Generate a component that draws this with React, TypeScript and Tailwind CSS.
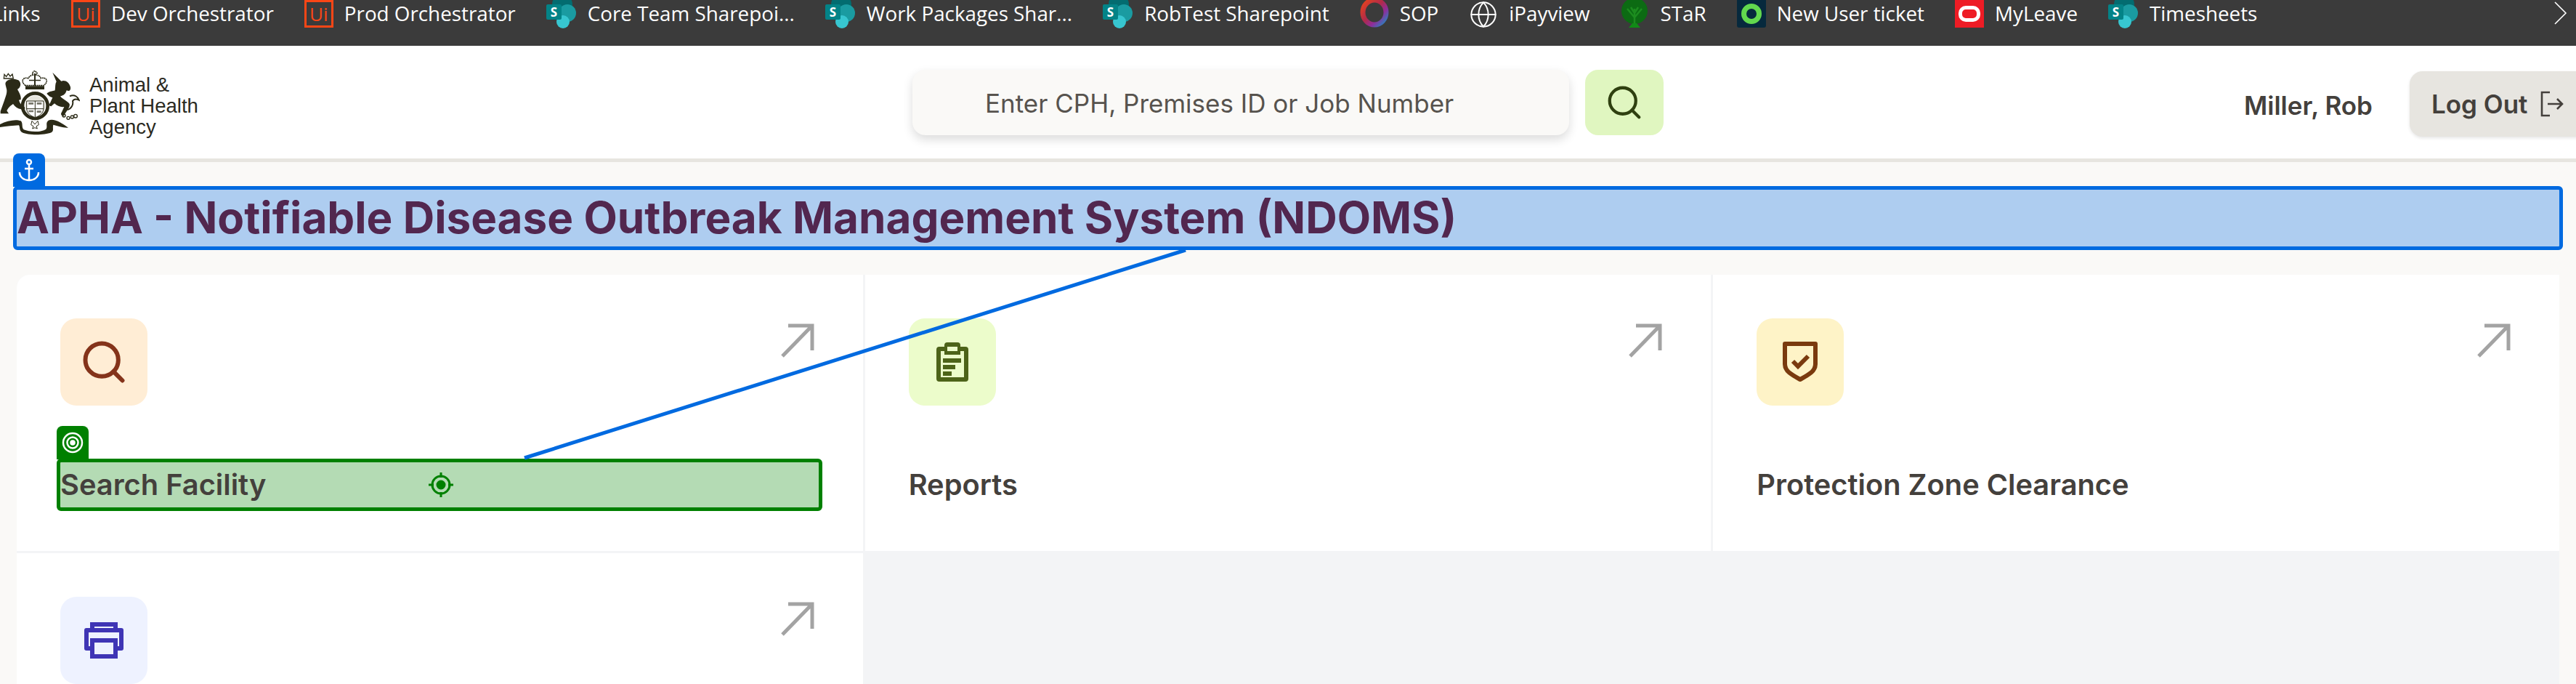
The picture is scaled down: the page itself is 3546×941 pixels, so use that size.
import React from "react";
import { Globe, Search } from "lucide-react";

const SharepointIcon = () => (
  <svg width="42" height="40" viewBox="0 0 42 40" className="shrink-0">
    <circle cx="22" cy="6" r="14" fill="#036c70" />
    <circle cx="29" cy="18" r="12" fill="#1a9ba1" />
    <circle cx="23" cy="30" r="9" fill="#37c6d0" />
    <rect x="0" y="6" width="21" height="21" rx="2" fill="#038387" />
    <text x="10.5" y="23" textAnchor="middle" fontSize="17" fontWeight="700" fill="#fff" fontFamily="Open Sans, sans-serif">
      S
    </text>
  </svg>
);

const UiIcon = () => (
  <div className="flex h-[38px] w-[40px] shrink-0 items-center justify-center border-[3px] border-[#fa4616] font-['Open_Sans',sans-serif] text-[26px] leading-none text-[#fa4616]">
    Ui
  </div>
);

const SopIcon = () => (
  <svg width="40" height="38" viewBox="0 0 40 38" className="shrink-0">
    <defs>
      <linearGradient id="sop" x1="0" y1="0" x2="1" y2="1">
        <stop offset="0" stopColor="#e8441c" />
        <stop offset="0.45" stopColor="#b02a4a" />
        <stop offset="0.7" stopColor="#8e2d9c" />
        <stop offset="1" stopColor="#1a8fc4" />
      </linearGradient>
    </defs>
    <ellipse cx="20" cy="17" rx="16" ry="17" fill="none" stroke="url(#sop)" strokeWidth="7" />
  </svg>
);

const TreeIcon = () => (
  <svg width="40" height="40" viewBox="0 0 40 40" className="shrink-0">
    <ellipse cx="20" cy="15" rx="18" ry="18" fill="#0c6b13" />
    <path d="M20 36V12M20 24 10 12M20 24l10-12M20 18l-5-8M20 18l5-8" stroke="#1c8c1f" strokeWidth="2.5" fill="none" />
    <path d="M12 38h16l-5-6h-6z" fill="#118a17" />
  </svg>
);

const TicketIcon = () => (
  <div className="flex h-[38px] w-[40px] shrink-0 items-center justify-center rounded-b-[3px] bg-[#06293d]">
    <div className="h-[28px] w-[28px] rounded-full border-[7px] border-[#62d84e]" />
  </div>
);

const LeaveIcon = () => (
  <div className="flex h-[38px] w-[40px] shrink-0 items-center justify-center bg-[#ee1c25]">
    <div className="h-[22px] w-[30px] rounded-[10px] border-[5px] border-white" />
  </div>
);

const bookmarks = [
  { label: "Dev Orchestrator", icon: <UiIcon /> },
  { label: "Prod Orchestrator", icon: <UiIcon /> },
  { label: "Core Team Sharepoi...", icon: <SharepointIcon /> },
  { label: "Work Packages Shar...", icon: <SharepointIcon /> },
  { label: "RobTest Sharepoint", icon: <SharepointIcon /> },
  { label: "SOP", icon: <SopIcon /> },
  { label: "iPayview", icon: <Globe className="shrink-0 text-white" size={40} strokeWidth={1.2} /> },
  { label: "STaR", icon: <TreeIcon /> },
  { label: "New User ticket", icon: <TicketIcon /> },
  { label: "MyLeave", icon: <LeaveIcon /> },
  { label: "Timesheets", icon: <SharepointIcon /> },
];

const Crest = () => (
  <svg width="110" height="89" viewBox="0 25 330 265" className="shrink-0" fill="#2b2a17">
    {/* crown */}
    <path d="M105 86c-22-18-10-36 12-30 6-10 12-12 20-14l-4-8 10-9 10 9-4 8c10 2 16 5 20 14 22-6 34 12 12 30z" fill="none" stroke="#2b2a17" strokeWidth="5" strokeDasharray="6 2" />
    <path d="M141 36h6v50h-6zM120 62h48v5h-48z" />
    <rect x="105" y="88" width="78" height="14" />
    {/* lion */}
    <path d="M24 72c10-14 36-16 52-8 14 12 10 30-4 38 8 14 16 28 14 42l-8 2c4 14 12 22 22 28 8 6 0 16-12 10-14-2-26-10-34-22-14 10-20 16-26 28l8 12H2v-10l16-44c6-18 14-36 8-52-2-10-6-18-2-24z" />
    <path d="M18 40l8 9 8-12 8 11 9-9 4 18H16z" fill="none" stroke="#2b2a17" strokeWidth="4" />
    {/* shield */}
    <circle cx="145" cy="170" r="52" fill="none" stroke="#2b2a17" strokeWidth="14" />
    <circle cx="145" cy="170" r="42" fill="#e5e4dc" />
    <path d="M110 150h70v30c0 20-18 32-35 38-17-6-35-18-35-38z" fill="#fff" stroke="#2b2a17" strokeWidth="3" />
    <path d="M145 150v68M110 182h70" stroke="#2b2a17" strokeWidth="3" />
    <path d="M118 156h20v8h-20zM152 156h20v8h-20zM118 188h20v8h-20zM152 190h18v8h-18z" fill="#77766a" />
    {/* unicorn */}
    <path d="M217 32l36 36c16-6 32 4 38 24 2 12-4 20-16 14-4 14-12 22-26 24 10 14 30 20 38 32 4 14-14 30-24 50-10 0-14-8-8-16l10-22c-14 2-30-4-40-14l-14 12c-8-2-10-8-4-14l10-22c-10-2-16-8-24-16 8-10 24-10 34-14 2-14 0-26 6-36z" />
    <path d="M288 130c20-10 34 4 38 16-12-6-20-6-26 4 4 16-6 32-22 36" fill="none" stroke="#2b2a17" strokeWidth="6" />
    <g fill="none" stroke="#2b2a17" strokeWidth="4">
      <circle cx="264" cy="210" r="6" />
      <circle cx="282" cy="220" r="6" />
      <circle cx="298" cy="216" r="6" />
      <circle cx="312" cy="212" r="7" />
    </g>
    {/* motto ribbon */}
    <path d="M0 246c30-16 66-22 86-14 10 8 2 28 12 36 22 10 72 12 92-2 8-10-4-26 10-36 24-10 56 12 82 30-22 2-42-8-62-12-4 14 4 24-8 32-30 12-96 12-120 0-14-8-8-20-14-30-24 2-48 4-78 8z" />
    <path d="M132 232l12 14 12-14 4 16-10 6 4 10-10-4-10 4 4-10-10-6z" fill="none" stroke="#2b2a17" strokeWidth="3" />
  </svg>
);

const CardArrow = () => (
  <svg width="46" height="48" viewBox="0 0 46 48" fill="none" stroke="#a3a3a3" strokeWidth="5" className="mt-[6px] mr-[7px] shrink-0">
    <path d="M2 46 43 4M10 4h33v34" />
  </svg>
);

const ClipboardIcon = () => (
  <svg width="44" height="54" viewBox="0 0 44 54" fill="#4d6319">
    <path d="M4 6h7V4a4 4 0 0 1 4-4h14a4 4 0 0 1 4 4v2h7a4 4 0 0 1 4 4v40a4 4 0 0 1-4 4H4a4 4 0 0 1-4-4V10a4 4 0 0 1 4-4z" />
    <path d="M6 12h5v5h22v-5h5v36H6z" fill="#ecfccb" />
    <path d="M15 6h14v6H15z" fill="#ecfccb" />
    <path d="M9 22h25v6H9zM9 31h17v6H9zM9 40h12v6H9z" />
  </svg>
);

const ShieldIcon = () => (
  <svg width="48" height="56" viewBox="0 0 48 56" fill="none" stroke="#7a3a0e" strokeWidth="6">
    <path d="M3 3h42v28c0 10-10 15-21 21C13 46 3 41 3 31z" strokeLinejoin="round" />
    <path d="M14 27l7 7 14-14" strokeWidth="6" />
  </svg>
);

const PrinterIcon = () => (
  <svg width="54" height="50" viewBox="0 0 54 50" fill="none" stroke="#3f35b5" strokeWidth="6">
    <path d="M11 11V3h32v8" />
    <path d="M11 36H3V11h48v25h-8" strokeLinejoin="round" />
    <path d="M11 25h32v22H11z" />
  </svg>
);

const Card = ({ tile, icon, label, picked }: { tile: string; icon: React.ReactNode; label?: string; picked?: boolean }) => (
  <div className="h-[380px] bg-white p-[60px] first:rounded-tl-[18px]">
    <div className="flex items-start justify-between">
      <div className={`flex h-[120px] w-[120px] items-center justify-center rounded-[22px] ${tile}`}>{icon}</div>
      <CardArrow />
    </div>
    <div
      className={`relative mt-[73px] -ml-[5px] flex h-[72px] w-[1054px] items-center rounded-[6px] border-[5px] text-[39.8px] font-semibold text-[#44403c] ${
        picked ? "border-[#008000] bg-[#b4dbb4] text-[#3a5a30]" : "border-transparent"
      }`}
    >
      {label}
      {picked && (
        <>
          <div className="absolute -top-[50px] -left-[5px] flex h-[46px] w-[44px] items-center justify-center rounded-t-[8px] bg-[#008000]">
            <svg width="30" height="30" viewBox="0 0 30 30" fill="none" stroke="#fff" strokeWidth="2.5">
              <circle cx="15" cy="15" r="13" />
              <circle cx="15" cy="15" r="7.5" />
              <circle cx="15" cy="15" r="2.5" fill="#fff" />
            </svg>
          </div>
          <svg width="36" height="36" viewBox="0 0 36 36" fill="none" stroke="#008000" strokeWidth="3" className="absolute top-[13px] left-[506px]">
            <circle cx="18" cy="18" r="12" />
            <circle cx="18" cy="18" r="5" fill="#008000" />
            <path d="M18 1v7M18 28v7M1 18h7M28 18h7" />
          </svg>
        </>
      )}
    </div>
  </div>
);

export default function App() {
  return (
    <div className="relative flex h-[941px] w-[3546px] flex-col overflow-hidden bg-[#faf9f7] font-['Inter',sans-serif]">
      {/* browser bookmarks */}
      <div className="flex h-[63px] shrink-0 items-start overflow-hidden bg-[#3b3b3b] font-['Open_Sans',sans-serif] text-[27.8px] leading-[36px] text-white">
        <span className="-ml-[11px] w-[109px] shrink-0">Links</span>
        <div className="flex gap-[42px]">
          {bookmarks.map((b, i) => (
            <div key={i} className="flex items-start gap-[15px] whitespace-nowrap">
              {b.icon}
              <span>{b.label}</span>
            </div>
          ))}
        </div>
        <svg width="18" height="32" viewBox="0 0 18 32" fill="none" stroke="#fff" strokeWidth="1.6" className="absolute top-[2px] left-[3516px]">
          <path d="M1 1l15 15L1 31" />
        </svg>
      </div>

      {/* header */}
      <header className="flex h-[160px] shrink-0 border-b-[5px] border-[#e7e5e0] bg-white">
        <div className="flex w-[1256px] shrink-0 items-start pt-[34px]">
          <Crest />
          <div className="mt-[5px] ml-[13px] font-['Liberation_Sans',sans-serif] text-[27.5px] leading-[29px] text-[#2b2a1f]">
            Animal &amp;
            <br />
            Plant Health
            <br />
            Agency
          </div>
        </div>
        <div className="mt-[33px] flex h-[90px] w-[904px] shrink-0 items-center rounded-[18px] bg-[#faf9f7] pt-[2px] pl-[100px] text-[35px] text-[#57534e] shadow-[0_6px_14px_rgba(0,0,0,0.14)]">
          Enter CPH, Premises ID or Job Number
        </div>
        <div className="mt-[33px] ml-[22px] flex h-[90px] w-[108px] shrink-0 items-center justify-center rounded-[18px] bg-[#e0f6c0]">
          <Search size={54} strokeWidth={1.9} color="#2f4010" />
        </div>
        <div className="mt-[60px] ml-[799px] shrink-0 text-[35px] leading-[44px] font-semibold text-[#44403c]">Miller, Rob</div>
        <div className="mt-[35px] ml-[51px] flex h-[90px] w-[260px] shrink-0 items-center gap-[18px] rounded-[18px] bg-[#e7e5e0] pl-[30px] text-[35px] font-semibold text-[#44403c] shadow-[0_2px_4px_rgba(0,0,0,0.1)]">
          Log Out
          <svg width="32" height="36" viewBox="0 0 32 36" fill="none" stroke="#44403c" strokeWidth="2.6">
            <path d="M13 2H2v32h11M10 18h20M23 11l7 7-7 7" />
          </svg>
        </div>
      </header>

      <main className="flex flex-1 flex-col pt-[33px]">
        <h1 className="relative mx-[18px] flex h-[88px] shrink-0 items-center rounded-[6px] border-[5px] border-[#006ae0] bg-[#aecdf0] text-[60.2px] font-bold whitespace-nowrap text-[#52274f]">
          APHA - Notifiable Disease Outbreak Management System (NDOMS)
          <div className="absolute -top-[50px] -left-[5px] flex h-[46px] w-[44px] items-center justify-center rounded-t-[8px] bg-[#006ae0]">
            <svg width="30" height="32" viewBox="0 0 30 32" fill="none" stroke="#fff" strokeWidth="2.5">
              <circle cx="15" cy="5" r="3" />
              <path d="M15 8v22M9 14h12M2 19c0 7 6 11 13 11s13-4 13-11" />
            </svg>
          </div>
        </h1>

        <div className="mt-[34px] ml-[23px] grid w-[3500px] grid-cols-3 gap-[3px] rounded-tl-[18px] bg-[#f3f4f6]">
          <Card tile="bg-[#ffedd5]" icon={<Search size={68} strokeWidth={2.1} color="#84331a" />} label="Search Facility" picked />
          <Card tile="bg-[#ecfccb]" icon={<ClipboardIcon />} label="Reports" />
          <Card tile="bg-[#fef3c7]" icon={<ShieldIcon />} label="Protection Zone Clearance" />
          <Card tile="bg-[#eef2ff]" icon={<PrinterIcon />} />
        </div>
      </main>

      {/* connector between the anchor and the target */}
      <svg width="3546" height="941" className="pointer-events-none absolute top-0 left-0">
        <line x1="722" y1="630" x2="1632" y2="344" stroke="#006ae0" strokeWidth="5" />
      </svg>
    </div>
  );
}
